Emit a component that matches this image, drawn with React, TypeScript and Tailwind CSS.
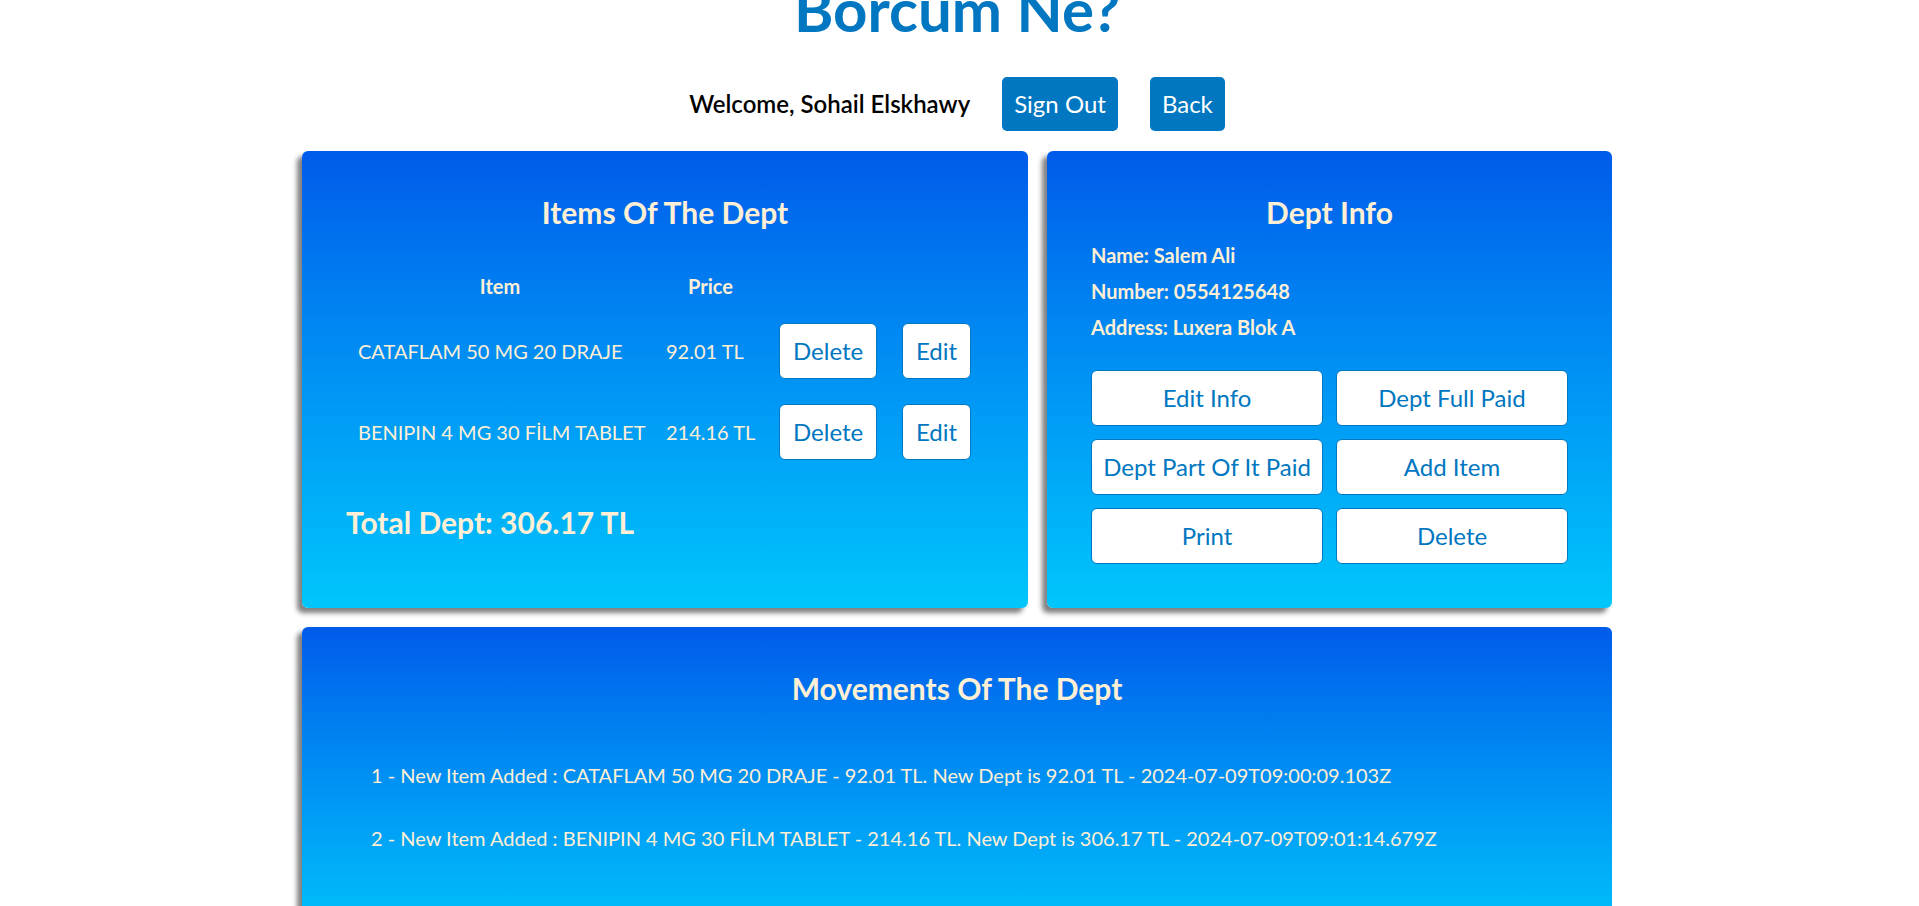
import type { ReactNode } from "react";

const items = [
  { name: "CATAFLAM 50 MG 20 DRAJE", price: "92.01 TL" },
  { name: "BENIPIN 4 MG 30 FİLM TABLET", price: "214.16 TL" },
];

const info = ["Name: Salem Ali", "Number: 0554125648", "Address: Luxera Blok A"];

const actions = ["Edit Info", "Dept Full Paid", "Dept Part Of It Paid", "Add Item", "Print", "Delete"];

const movements = [
  "1 - New Item Added : CATAFLAM 50 MG 20 DRAJE - 92.01 TL. New Dept is 92.01 TL - 2024-07-09T09:00:09.103Z",
  "2 - New Item Added : BENIPIN 4 MG 30 FİLM TABLET - 214.16 TL. New Dept is 306.17 TL - 2024-07-09T09:01:14.679Z",
];

function PrimaryButton({ children }: { children: ReactNode }) {
  return (
    <button type="button" className="rounded-[5px] bg-[#0077c0] px-3 py-3 text-[24px] leading-[30px] text-white">
      {children}
    </button>
  );
}

function LightButton({ className, children }: { className: string; children: ReactNode }) {
  return (
    <button
      type="button"
      className={
        "block rounded-[6px] border border-[#0077c0] bg-white py-3 text-[24px] leading-[30px] whitespace-nowrap text-[#0077c0] " +
        className
      }
    >
      {children}
    </button>
  );
}

function Card({ title, className, children }: { title: string; className: string; children: ReactNode }) {
  return (
    <section
      className={
        "rounded-[6px] bg-linear-to-b from-[#005bea] to-[#00c6fb] px-11 pt-11 text-[#ffefd5] shadow-[-5px_5px_5px_#808080] " +
        className
      }
    >
      <h2 className="text-center text-[30px] leading-[34px] font-bold">{title}</h2>
      {children}
    </section>
  );
}

export default function App() {
  return (
    <div className="h-screen overflow-hidden bg-white pr-[5px] font-['Lato',sans-serif] text-black">
      <h1 className="-mt-[27px] text-center text-[60px] leading-[72px] font-bold text-[#0077c0]">Borcum Ne?</h1>

      <header className="mt-8 flex items-center justify-center gap-8">
        <p className="text-[24px] leading-[30px] font-semibold">Welcome, Sohail Elskhawy</p>
        <PrimaryButton>Sign Out</PrimaryButton>
        <PrimaryButton>Back</PrimaryButton>
      </header>

      <main className="mx-auto mt-5 flex w-full max-w-[1310px] flex-col gap-[19px]">
        <div className="grid grid-cols-[726fr_565fr] gap-[19px]">
          <Card title="Items Of The Dept" className="pb-11">
            <table className="mt-[33px] w-full table-fixed text-[20px] leading-6 whitespace-nowrap">
              <colgroup>
                <col className="w-[308px]" />
                <col className="w-[113px]" />
                <col className="w-[123px]" />
                <col />
              </colgroup>
              <thead>
                <tr>
                  <th className="p-3">Item</th>
                  <th className="p-3">Price</th>
                  <td />
                  <td />
                </tr>
              </thead>
              <tbody>
                {items.map((item) => (
                  <tr key={item.name}>
                    <td className="pt-[13px] pb-3 pl-3">{item.name}</td>
                    <td className="pt-[13px] pb-3 pl-3">{item.price}</td>
                    <td className="pt-[13px] pb-3 pl-3">
                      <LightButton className="px-[13px]">Delete</LightButton>
                    </td>
                    <td className="pt-[13px] pb-3 pl-3">
                      <LightButton className="px-[13px]">Edit</LightButton>
                    </td>
                  </tr>
                ))}
              </tbody>
            </table>
            <p className="mt-[33px] text-[30px] leading-[34px] font-bold">Total Dept: 306.17 TL</p>
          </Card>

          <Card title="Dept Info" className="pb-11">
            <div className="mt-2 text-[20px] leading-9 font-bold">
              {info.map((line) => (
                <p key={line}>{line}</p>
              ))}
            </div>
            <div className="mt-[25px] grid grid-cols-2 gap-[13px]">
              {actions.map((label) => (
                <LightButton key={label} className="px-2">
                  {label}
                </LightButton>
              ))}
            </div>
          </Card>
        </div>

        <Card title="Movements Of The Dept" className="pb-[76px]">
          <ul className="mt-[39px] px-[25px] text-[20px] leading-[25px]">
            {movements.map((line) => (
              <li key={line} className="py-[19px]">
                {line}
              </li>
            ))}
          </ul>
        </Card>
      </main>
    </div>
  );
}
